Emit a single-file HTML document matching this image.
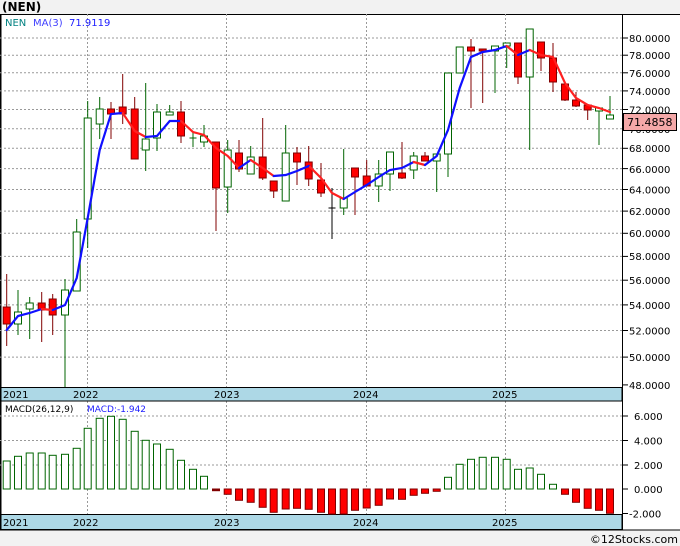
<!DOCTYPE html>
<html><head><meta charset="utf-8"><style>
body{margin:0;width:680px;height:546px;background:#f2f2f2;overflow:hidden;font-family:"DejaVu Sans","Liberation Sans",sans-serif}
svg{position:absolute;left:0;top:0}
</style></head><body>
<svg width="680" height="546" viewBox="0 0 680 546" xmlns="http://www.w3.org/2000/svg" font-family="DejaVu Sans, Liberation Sans, sans-serif">
<rect x="0" y="14" width="680" height="516" fill="#fff"/>
<text x="2" y="11" font-size="12" font-weight="bold" fill="#000">(NEN)</text>
<line x1="0" y1="14.5" x2="680" y2="14.5" stroke="#000"/>
<line x1="0.5" y1="14" x2="0.5" y2="530" stroke="#000" stroke-width="2"/>
<line x1="622.5" y1="14" x2="622.5" y2="530" stroke="#000"/>
<line x1="0" y1="530" x2="680" y2="530" stroke="#000"/>
<g stroke="#999" stroke-dasharray="2,2" stroke-width="1">
<line x1="0" x2="622" y1="38" y2="38"/><line x1="0" x2="622" y1="55.2" y2="55.2"/><line x1="0" x2="622" y1="72.8" y2="72.8"/><line x1="0" x2="622" y1="90.9" y2="90.9"/><line x1="0" x2="622" y1="109.5" y2="109.5"/><line x1="0" x2="622" y1="128.7" y2="128.7"/><line x1="0" x2="622" y1="148.3" y2="148.3"/><line x1="0" x2="622" y1="168.6" y2="168.6"/><line x1="0" x2="622" y1="189.5" y2="189.5"/><line x1="0" x2="622" y1="211.1" y2="211.1"/><line x1="0" x2="622" y1="233.3" y2="233.3"/><line x1="0" x2="622" y1="256.4" y2="256.4"/><line x1="0" x2="622" y1="280.2" y2="280.2"/><line x1="0" x2="622" y1="304.9" y2="304.9"/><line x1="0" x2="622" y1="330.5" y2="330.5"/><line x1="0" x2="622" y1="357.1" y2="357.1"/>
<line x1="87.5" x2="87.5" y1="14" y2="387"/><line x1="226.5" x2="226.5" y1="14" y2="387"/><line x1="366.5" x2="366.5" y1="14" y2="387"/><line x1="505.5" x2="505.5" y1="14" y2="387"/>
<line x1="0" x2="622" y1="416" y2="416"/><line x1="0" x2="622" y1="440.5" y2="440.5"/><line x1="0" x2="622" y1="465" y2="465"/>
<line x1="87.5" x2="87.5" y1="401" y2="515"/><line x1="226.5" x2="226.5" y1="401" y2="515"/><line x1="366.5" x2="366.5" y1="401" y2="515"/><line x1="505.5" x2="505.5" y1="401" y2="515"/>
</g>
<g stroke="#000"><line x1="623" x2="628" y1="38" y2="38"/><line x1="623" x2="628" y1="55.2" y2="55.2"/><line x1="623" x2="628" y1="72.8" y2="72.8"/><line x1="623" x2="628" y1="90.9" y2="90.9"/><line x1="623" x2="628" y1="109.5" y2="109.5"/><line x1="623" x2="628" y1="148.3" y2="148.3"/><line x1="623" x2="628" y1="168.6" y2="168.6"/><line x1="623" x2="628" y1="189.5" y2="189.5"/><line x1="623" x2="628" y1="211.1" y2="211.1"/><line x1="623" x2="628" y1="233.3" y2="233.3"/><line x1="623" x2="628" y1="256.4" y2="256.4"/><line x1="623" x2="628" y1="280.2" y2="280.2"/><line x1="623" x2="628" y1="304.9" y2="304.9"/><line x1="623" x2="628" y1="330.5" y2="330.5"/><line x1="623" x2="628" y1="357.1" y2="357.1"/><line x1="623" x2="628" y1="384.9" y2="384.9"/>
<line x1="623" x2="628" y1="416" y2="416"/><line x1="623" x2="628" y1="440.5" y2="440.5"/><line x1="623" x2="628" y1="465" y2="465"/><line x1="623" x2="628" y1="489" y2="489"/><line x1="623" x2="628" y1="513.5" y2="513.5"/></g>
<g font-size="10" fill="#000">
<text x="629" y="42">80.0000</text><text x="629" y="59">78.0000</text><text x="629" y="77">76.0000</text><text x="629" y="95">74.0000</text><text x="629" y="113.5">72.0000</text><text x="629" y="133">70.0000</text><text x="629" y="152">68.0000</text><text x="629" y="173">66.0000</text><text x="629" y="193.5">64.0000</text><text x="629" y="215">62.0000</text><text x="629" y="237">60.0000</text><text x="629" y="260">58.0000</text><text x="629" y="284">56.0000</text><text x="629" y="309">54.0000</text><text x="629" y="334.5">52.0000</text><text x="629" y="361">50.0000</text><text x="629" y="389">48.0000</text>
<text x="634" y="420">6.000</text><text x="634" y="444.5">4.000</text><text x="634" y="469">2.000</text><text x="634" y="493">0.000</text><text x="629" y="517.5">-2.000</text>
</g>
<rect x="623.5" y="113.5" width="53" height="17" fill="#f4a8a8" stroke="#000"/>
<text x="627" y="126" font-size="11" fill="#000">71.4858</text>
<text x="5" y="26" font-size="10" fill="#008080">NEN</text><text x="33" y="26" font-size="10" fill="#4040ff">MA(3)</text><text x="69" y="26" font-size="10" fill="#2020ff">71.9119</text>
<!-- candles -->
<g stroke-width="1">
<g stroke="#800000" fill="#f00">
<line x1="6.7" x2="6.7" y1="274" y2="346"/><rect x="3.2" y="307" width="7" height="17"/>
<line x1="41.7" x2="41.7" y1="292" y2="342"/><rect x="38.2" y="303" width="7" height="7"/>
<line x1="52.7" x2="52.7" y1="294" y2="335"/><rect x="49.2" y="299" width="7" height="16"/>
<line x1="111" x2="111" y1="102" y2="139"/><rect x="107.5" y="109" width="7" height="5"/>
<line x1="122.7" x2="122.7" y1="74" y2="124"/><rect x="119.2" y="107" width="7" height="7"/>
<line x1="134.7" x2="134.7" y1="97" y2="159"/><rect x="131.2" y="109" width="7" height="50"/>
<line x1="181" x2="181" y1="101" y2="143"/><rect x="177.5" y="112" width="7" height="24"/>
<line x1="216" x2="216" y1="142" y2="231"/><rect x="212.5" y="142" width="7" height="46"/>
<line x1="239" x2="239" y1="140" y2="172"/><rect x="235.5" y="153" width="7" height="16"/>
<line x1="262.7" x2="262.7" y1="118" y2="180"/><rect x="259.2" y="157" width="7" height="21"/>
<line x1="273.7" x2="273.7" y1="181" y2="198"/><rect x="270.2" y="181" width="7" height="10"/>
<line x1="297" x2="297" y1="147" y2="185"/><rect x="293.5" y="153" width="7" height="9"/>
<line x1="308.7" x2="308.7" y1="146" y2="186"/><rect x="305.2" y="162" width="7" height="17"/>
<line x1="321" x2="321" y1="163" y2="197"/><rect x="317.5" y="180" width="7" height="13"/>
<line x1="355" x2="355" y1="168" y2="215"/><rect x="351.5" y="168" width="7" height="9"/>
<line x1="366.7" x2="366.7" y1="160" y2="186"/><rect x="363.2" y="176" width="7" height="10"/>
<line x1="402" x2="402" y1="142" y2="179"/><rect x="398.5" y="173" width="7" height="5"/>
<line x1="425" x2="425" y1="152" y2="161"/><rect x="421.5" y="156" width="7" height="5"/>
<line x1="471" x2="471" y1="39" y2="108"/><rect x="467.5" y="47" width="7" height="4"/>
<line x1="482.7" x2="482.7" y1="49" y2="103"/><rect x="479.2" y="49" width="7" height="2"/>
<line x1="518" x2="518" y1="43" y2="84"/><rect x="514.5" y="43" width="7" height="34"/>
<line x1="541" x2="541" y1="42" y2="71"/><rect x="537.5" y="42" width="7" height="16"/>
<line x1="553" x2="553" y1="43" y2="92"/><rect x="549.5" y="58" width="7" height="24"/>
<line x1="565" x2="565" y1="84" y2="101"/><rect x="561.5" y="84" width="7" height="16"/>
<line x1="576" x2="576" y1="92" y2="107"/><rect x="572.5" y="100" width="7" height="6"/>
<line x1="587.7" x2="587.7" y1="105" y2="120"/><rect x="584.2" y="105" width="7" height="5"/>
</g>
<g stroke="#006400" fill="#fff">
<line x1="18" x2="18" y1="290" y2="335"/><rect x="14.5" y="312" width="7" height="12"/>
<line x1="29.7" x2="29.7" y1="297" y2="339"/><rect x="26.2" y="303" width="7" height="6"/>
<line x1="65" x2="65" y1="279" y2="387"/><rect x="61.5" y="290" width="7" height="25"/>
<line x1="76.7" x2="76.7" y1="219" y2="291"/><rect x="73.2" y="232" width="7" height="59"/>
<line x1="87.7" x2="87.7" y1="101" y2="248"/><rect x="84.2" y="118" width="7" height="101"/>
<line x1="99.7" x2="99.7" y1="97" y2="139"/><rect x="96.2" y="109" width="7" height="15"/>
<line x1="145.7" x2="145.7" y1="83" y2="171"/><rect x="142.2" y="139" width="7" height="11"/>
<line x1="157" x2="157" y1="104" y2="151"/><rect x="153.5" y="112" width="7" height="26"/>
<line x1="169.7" x2="169.7" y1="105" y2="115"/><rect x="166.2" y="112" width="7" height="3"/>
<line x1="193" x2="193" y1="133" y2="147"/><line x1="189.5" x2="196.5" y1="138" y2="138"/>
<line x1="204" x2="204" y1="125" y2="147"/><rect x="200.5" y="136" width="7" height="6"/>
<line x1="227.7" x2="227.7" y1="140" y2="213"/><rect x="224.2" y="150" width="7" height="37"/>
<line x1="250.7" x2="250.7" y1="146" y2="174"/><rect x="247.2" y="157" width="7" height="17"/>
<line x1="285.7" x2="285.7" y1="125" y2="201"/><rect x="282.2" y="153" width="7" height="48"/>
<line x1="343.7" x2="343.7" y1="149" y2="215"/><rect x="340.2" y="198" width="7" height="10"/>
<line x1="378.7" x2="378.7" y1="160" y2="202"/><rect x="375.2" y="174" width="7" height="12"/>
<line x1="390" x2="390" y1="152" y2="191"/><rect x="386.5" y="152" width="7" height="22"/>
<line x1="413.7" x2="413.7" y1="152" y2="179"/><rect x="410.2" y="156" width="7" height="14"/>
<line x1="436.7" x2="436.7" y1="154" y2="192"/><rect x="433.2" y="154" width="7" height="7"/>
<line x1="448" x2="448" y1="73" y2="177"/><rect x="444.5" y="73" width="7" height="81"/>
<rect x="456.2" y="47" width="7" height="26"/>
<line x1="495" x2="495" y1="46" y2="93"/><rect x="491.5" y="46" width="7" height="5"/>
<line x1="506.7" x2="506.7" y1="43" y2="68"/><rect x="503.2" y="43" width="7" height="3"/>
<line x1="529.7" x2="529.7" y1="29" y2="150"/><rect x="526.2" y="29" width="7" height="48"/>
<line x1="599" x2="599" y1="108" y2="145"/><rect x="595.5" y="108" width="7" height="3"/>
<line x1="610" x2="610" y1="96" y2="119"/><rect x="606.5" y="115" width="7" height="4"/>
</g>
<g stroke="#000"><line x1="332" x2="332" y1="188" y2="239"/><line x1="328.5" x2="335.5" y1="208" y2="208"/></g>
</g>
<!-- MA -->
<g stroke-width="2.2" fill="none" stroke-linecap="round">
<polyline stroke="#1010ff" points="6.7,330 18,316 29.7,313 41.7,309"/>
<polyline stroke="#ff2020" points="41.7,309 52.7,310"/>
<polyline stroke="#1010ff" points="52.7,310 65,305 76.7,278 87.7,218 99.7,150 111,114 122.7,113"/>
<polyline stroke="#ff2020" points="122.7,113 134.7,131 145.7,137"/>
<polyline stroke="#1010ff" points="145.7,137 157,136 169.7,121 181,121"/>
<polyline stroke="#ff2020" points="181,121 193,132 204,135 216,148 227.7,156 239,168"/>
<polyline stroke="#1010ff" points="239,168 250.7,160"/>
<polyline stroke="#ff2020" points="250.7,160 262.7,168 273.7,176"/>
<polyline stroke="#1010ff" points="273.7,176 285.7,175 297,171 308.7,166 310,167"/>
<polyline stroke="#ff2020" points="310,167 321,178 332,193 343.7,199"/>
<polyline stroke="#1010ff" points="343.7,199 355,192 366.7,185 378.7,177 390,170 402,168 413.7,162"/>
<polyline stroke="#ff2020" points="413.7,162 425,165"/>
<polyline stroke="#1010ff" points="425,165 436.7,156 448,130 459.7,88 471,57 482.7,52 495,50 506.7,46"/>
<polyline stroke="#ff2020" points="506.7,46 518,55"/>
<polyline stroke="#1010ff" points="518,55 529.7,50"/>
<polyline stroke="#ff2020" points="529.7,50 541,55 553,57 565,83 576,98 587.7,105 599,108 610,112"/>
</g>
<!-- date bars -->
<rect x="1" y="387.5" width="621" height="13.5" fill="#add8e6" stroke="#000"/>
<rect x="1" y="514.5" width="621" height="15" fill="#add8e6" stroke="#000"/>
<g font-size="10" fill="#000">
<text x="3" y="398">2021</text><text x="73" y="398">2022</text><text x="214" y="398">2023</text><text x="353" y="398">2024</text><text x="492" y="398">2025</text>
<text x="3" y="526">2021</text><text x="73" y="526">2022</text><text x="214" y="526">2023</text><text x="353" y="526">2024</text><text x="492" y="526">2025</text>
</g>
<text x="5" y="412" font-size="9" fill="#000">MACD(26,12,9)</text>
<text x="87" y="412" font-size="9" fill="#2020ff">MACD:-1.942</text>
<!-- MACD bars -->
<g stroke="#006400" fill="#fff">
<rect x="3.2" y="461" width="7" height="28"/><rect x="14.5" y="456.3" width="7" height="32.7"/><rect x="26.2" y="453" width="7" height="36"/><rect x="38.2" y="453" width="7" height="36"/><rect x="49.2" y="455.3" width="7" height="33.7"/><rect x="61.5" y="454.3" width="7" height="34.7"/><rect x="73.2" y="448.3" width="7" height="40.7"/><rect x="84.2" y="428.3" width="7" height="60.7"/><rect x="96.2" y="418.3" width="7" height="70.7"/><rect x="107.5" y="416.3" width="7" height="72.7"/><rect x="119.2" y="419.3" width="7" height="69.7"/><rect x="131.2" y="431.3" width="7" height="57.7"/><rect x="142.2" y="440.3" width="7" height="48.7"/><rect x="153.5" y="444" width="7" height="45"/><rect x="166.2" y="449.3" width="7" height="39.7"/><rect x="177.5" y="460.3" width="7" height="28.7"/><rect x="189.5" y="469.3" width="7" height="19.7"/><rect x="200.5" y="476.3" width="7" height="12.7"/>
<rect x="444.5" y="477.3" width="7" height="11.7"/><rect x="456.2" y="464.3" width="7" height="24.7"/><rect x="467.5" y="459.3" width="7" height="29.7"/><rect x="479.2" y="457.3" width="7" height="31.7"/><rect x="491.5" y="457.3" width="7" height="31.7"/><rect x="503.2" y="459.3" width="7" height="29.7"/><rect x="514.5" y="469.3" width="7" height="19.7"/><rect x="526.2" y="468" width="7" height="21"/><rect x="537.5" y="474.3" width="7" height="14.7"/><rect x="549.5" y="484.3" width="7" height="4.7"/>
</g>
<g stroke="#800000" fill="#f00">
<rect x="212.5" y="489" width="7" height="1.7" fill="#800000"/><rect x="224.2" y="489" width="7" height="5.3"/><rect x="235.5" y="489" width="7" height="11.3"/><rect x="247.2" y="489" width="7" height="13.3"/><rect x="259.2" y="489" width="7" height="18.3"/><rect x="270.2" y="489" width="7" height="23.3"/><rect x="282.2" y="489" width="7" height="20"/><rect x="293.5" y="489" width="7" height="19.3"/><rect x="305.2" y="489" width="7" height="20.3"/><rect x="317.5" y="489" width="7" height="23.3"/><rect x="328.5" y="489" width="7" height="25"/><rect x="340.2" y="489" width="7" height="25"/><rect x="351.5" y="489" width="7" height="21.3"/><rect x="363.2" y="489" width="7" height="19"/><rect x="375.2" y="489" width="7" height="16.3"/><rect x="386.5" y="489" width="7" height="10"/><rect x="398.5" y="489" width="7" height="10.3"/><rect x="410.2" y="489" width="7" height="6.3"/><rect x="421.5" y="489" width="7" height="4.3"/><rect x="433.2" y="489" width="7" height="2.3"/>
<rect x="561.5" y="489" width="7" height="5.3"/><rect x="572.5" y="489" width="7" height="13.3"/><rect x="584.2" y="489" width="7" height="19.3"/><rect x="595.5" y="489" width="7" height="21.3"/><rect x="606.5" y="489" width="7" height="24.3"/>
</g>
<rect x="0" y="531" width="680" height="15" fill="#f2f2f2"/>
<text x="678" y="543" font-size="11" fill="#000" text-anchor="end">©12Stocks.com</text>
</svg>
</body></html>
